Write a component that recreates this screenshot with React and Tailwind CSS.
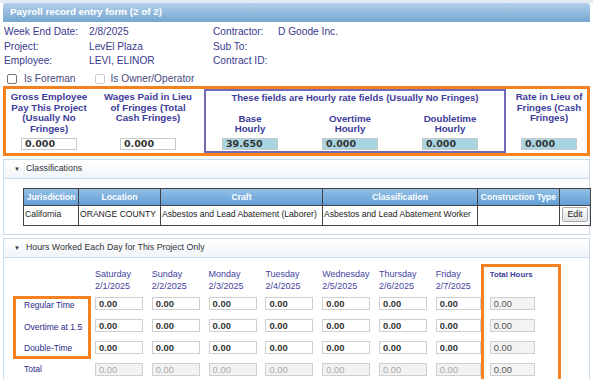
import React from 'react'

const days = [
  ['Saturday', '2/1/2025'],
  ['Sunday', '2/2/2025'],
  ['Monday', '2/3/2025'],
  ['Tuesday', '2/4/2025'],
  ['Wednesday', '2/5/2025'],
  ['Thursday', '2/6/2025'],
  ['Friday', '2/7/2025'],
]

const info = [
  ['Week End Date:', '2/8/2025', 'Contractor:', 'D Goode Inc.'],
  ['Project:', 'LevEl Plaza', 'Sub To:', ''],
  ['Employee:', 'LEVI, ELINOR', 'Contract ID:', ''],
]

function Box({ value, blue }) {
  return (
    <div
      className={`h-[12px] w-[56px] border border-[#c9c9c9] pl-[3px] font-['DejaVu_Sans',sans-serif] text-[9.5px] font-bold leading-[10px] text-[#333] ${
        blue ? 'bg-[#a9d5e2]' : 'bg-white'
      }`}
    >
      {value}
    </div>
  )
}

function RateCol({ lines, width, value, blue }) {
  return (
    <div className={`flex flex-col items-center ${width}`}>
      <div className="whitespace-nowrap text-center text-[9.7px] font-bold leading-[10.7px] text-[#3d3d9a]">
        {lines.map((l) => (
          <div key={l}>{l}</div>
        ))}
      </div>
      <div className="mt-auto">
        <Box value={value} blue={blue} />
      </div>
    </div>
  )
}

function SectionHead({ title }) {
  return (
    <div className="flex h-[19px] items-center whitespace-nowrap border-b border-[#c9dbee] bg-gradient-to-b from-white to-[#f1f5f9] pl-[10px] text-[8.8px] text-[#333]">
      <span className="mr-[6px] text-[6px]">▼</span>
      {title}
    </div>
  )
}

function HourInput({ value, total, w = 'w-[48px]' }) {
  return (
    <div
      className={`h-[13px] ${w} border border-[#cfcfcf] pl-[3px] text-[9.4px] leading-[11px] ${
        total ? 'bg-[#f2f2f2] text-[#aaa]' : 'bg-white font-bold text-[#333]'
      }`}
    >
      {value}
    </div>
  )
}

const cell = 'border border-[#444] pl-[1px] pt-[2px] whitespace-nowrap'

export default function App() {
  return (
    <div className="h-[379px] w-[593px] overflow-hidden bg-white font-['Liberation_Sans',Arial,sans-serif]">
      <div className="h-[3px] bg-[#e4eaf1]" />
      <div className="mx-[3px] flex h-[19px] items-center rounded-t-[3px] bg-gradient-to-b from-[#b4d0ea] to-[#75a6d2] pl-[7px] text-[9.8px] font-bold text-white">
        Payroll record entry form (2 of 2)
      </div>

      <div className="pl-[4px] pt-[3px] text-[10.2px] leading-[14.5px] text-[#3a3a8e]">
        {info.map(([a, b, c, d]) => (
          <div key={a} className="grid grid-cols-[85px_124px_65px_1fr] whitespace-nowrap">
            <span>{a}</span>
            <span>{b}</span>
            <span>{c}</span>
            <span>{d}</span>
          </div>
        ))}
        <div className="mt-[3px] flex items-center text-[#4a4a80]">
          <span className="ml-[3px] h-[10px] w-[10px] rounded-[2px] border border-[#777] bg-white" />
          <span className="ml-[7px]">Is Foreman</span>
          <span className="ml-[19px] h-[10px] w-[10px] rounded-[2px] border border-[#ccc] bg-white" />
          <span className="ml-[6px]">Is Owner/Operator</span>
        </div>
      </div>

      <div className="mx-[3px] flex h-[70px] border-[3px] border-[#f58220]">
        <div className="flex w-[198px] pb-[3px] pt-[3px]">
          <RateCol
            width="w-[86px]"
            lines={['Gross Employee', 'Pay This Project', '(Usually No', 'Fringes)']}
            value="0.000"
          />
          <RateCol
            width="w-[112px]"
            lines={['Wages Paid in Lieu', 'of Fringes (Total', 'Cash Fringes)']}
            value="0.000"
          />
        </div>
        <div className="flex w-[302px] flex-col border-2 border-[#7469b6] pb-[1px] pt-[2px]">
          <div className="whitespace-nowrap text-center text-[9.5px] font-bold leading-[10.5px] text-[#3d3d9a]">
            These fields are Hourly rate fields (Usually No Fringes)
          </div>
          <div className="mt-[10px] flex flex-1">
            <RateCol width="w-[88px]" lines={['Base', 'Hourly']} value="39.650" blue />
            <div className="ml-[6px] flex">
              <RateCol width="w-[100px]" lines={['Overtime', 'Hourly']} value="0.000" blue />
              <RateCol width="w-[100px]" lines={['Doubletime', 'Hourly']} value="0.000" blue />
            </div>
          </div>
        </div>
        <div className="ml-[5px] flex pb-[3px] pt-[3px]">
          <RateCol
            width="w-[76px]"
            lines={['Rate in Lieu of', 'Fringes (Cash', 'Fringes)']}
            value="0.000"
            blue
          />
        </div>
      </div>

      <div className="mx-[3px] mt-[3px] h-[76px] border border-[#c9dbee]">
        <SectionHead title="Classifications" />
        <div className="pl-[19px] pt-[9px]">
          <table className="w-[568px] table-fixed border-collapse border border-[#444] text-[8.6px] text-[#222]">
            <thead>
              <tr className="h-[17px] bg-gradient-to-b from-[#92bfe6] to-[#5f9dd3] text-white">
                <th className="w-[55px] whitespace-nowrap border border-[#444] font-bold">Jurisdiction</th>
                <th className="w-[82px] whitespace-nowrap border border-[#444] font-bold">Location</th>
                <th className="w-[162px] whitespace-nowrap border border-[#444] font-bold">Craft</th>
                <th className="w-[155px] whitespace-nowrap border border-[#444] font-bold">Classification</th>
                <th className="w-[82px] whitespace-nowrap border border-[#444] font-bold">Construction Type</th>
                <th className="border border-[#444]" />
              </tr>
            </thead>
            <tbody>
              <tr className="h-[20px] align-top">
                <td className={cell}>California</td>
                <td className={cell}>ORANGE COUNTY</td>
                <td className={cell}>Asbestos and Lead Abatement (Laborer)</td>
                <td className={cell}>Asbestos and Lead Abatement Worker</td>
                <td className="border border-[#444]" />
                <td className="border border-[#444] px-[2px] pt-[1px]">
                  <div className="flex h-[15px] w-[26px] items-center justify-center rounded-[2px] border border-[#aaa] bg-gradient-to-b from-white to-[#e2e2e2] text-[8.8px] text-[#222]">
                    Edit
                  </div>
                </td>
              </tr>
            </tbody>
          </table>
        </div>
      </div>

      <div className="mx-[3px] mt-[3px] h-[160px] border border-[#c9dbee]">
        <SectionHead title="Hours Worked Each Day for This Project Only" />
        <div className="flex whitespace-nowrap bg-white">
          <div className="ml-[9px] mt-[38px] flex flex-col text-[8.5px] text-[#2a2a8a]">
            <div className="flex h-[63px] w-[78px] flex-col justify-between border-[3px] border-[#f58220] pb-[2px] pl-[8px] leading-[12px]">
              <span>Regular Time</span>
              <span>Overtime at 1.5</span>
              <span>Double-Time</span>
            </div>
            <span className="ml-[11px] mt-[4px] leading-[12px]">Total</span>
          </div>
          <div className="ml-[4px] flex">
            {days.map(([d, dt], i) => {
              const w = i === 6 ? 'w-[45px]' : 'w-[48px]'
              return (
                <div key={d} className={`flex flex-col pt-[10px] ${i === 6 ? 'w-[45px]' : 'w-[56.8px]'}`}>
                  <div className="h-[29px] text-[9px] leading-[12px] text-[#4343a0]">
                    <div>{d}</div>
                    <div>{dt}</div>
                  </div>
                  <div className="flex flex-col gap-[9px]">
                    <HourInput value="0.00" w={w} />
                    <HourInput value="0.00" w={w} />
                    <HourInput value="0.00" w={w} />
                    <HourInput value="0.00" total w={w} />
                  </div>
                </div>
              )
            })}
          </div>
          <div className="mt-[6px] h-[130px] w-[80px] border-[3px] border-[#f58220] pl-[6px]">
            <div className="h-[30px] pt-[2px] text-[7.8px] font-bold leading-[12px] text-[#3d3d9a]">
              Total Hours
            </div>
            <div className="flex flex-col gap-[9px]">
              {[0, 1, 2, 3].map((k) => (
                <div
                  key={k}
                  className="h-[13px] w-[45px] border border-[#cfcfcf] bg-[#f3f3f3] pl-[3px] text-[9.4px] leading-[11px] text-[#555]"
                >
                  0.00
                </div>
              ))}
            </div>
          </div>
        </div>
      </div>
    </div>
  )
}
